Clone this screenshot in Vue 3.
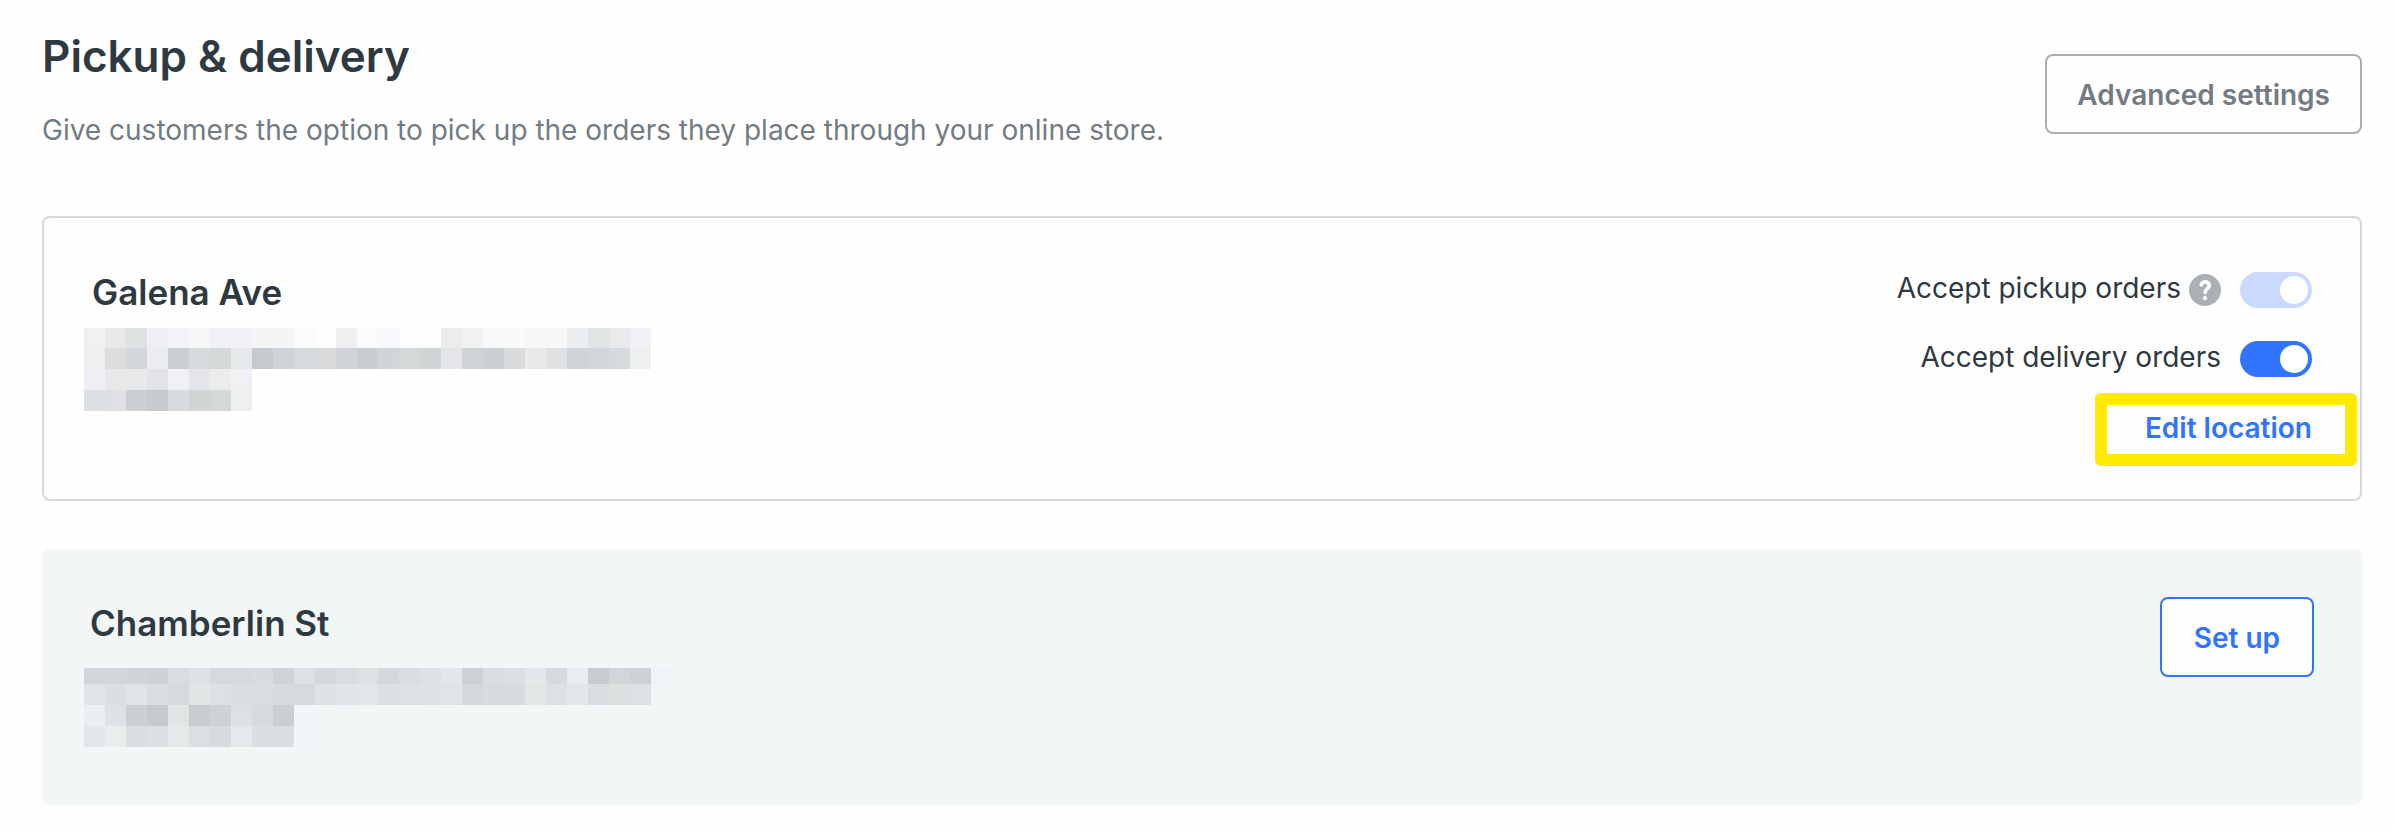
<template>
  <main class="page">
    <header class="page-header">
      <div>
        <h1 class="page-title">Pickup &amp; delivery</h1>
        <p class="page-intro">Give customers the option to pick up the orders they place through your online store.</p>
      </div>
      <button type="button" class="btn btn-muted">Advanced settings</button>
    </header>

    <section class="card card-active">
      <div>
        <h2 class="card-title">Galena Ave</h2>
        <div class="mosaic" aria-hidden="true">
          <div v-for="(row, r) in galenaAddress" :key="r" class="mosaic-row">
            <span v-for="(color, c) in row" :key="c" :style="{ background: '#' + color }"></span>
          </div>
        </div>
      </div>

      <div class="controls">
        <div class="control">
          <label for="pickup">Accept pickup orders</label>
          <button type="button" class="help" aria-label="About pickup orders">
            <svg viewBox="0 0 32 32" width="32" height="32">
              <circle cx="16" cy="16" r="16" fill="#abb0b4" />
              <path d="M12.200 10.800C13 8.600 14.400 7.900 16.100 7.900c2.500 0 4.200 1.400 4.200 3.500 0 3.300-4.200 3.200-4.200 7.200" fill="none" stroke="#fff" stroke-width="3.600" stroke-linecap="round" />
              <circle cx="16" cy="24.200" r="2.100" fill="#fff" />
            </svg>
          </button>
          <input id="pickup" v-model="pickup" type="checkbox" class="toggle" disabled />
        </div>
        <div class="control">
          <label for="delivery">Accept delivery orders</label>
          <input id="delivery" v-model="delivery" type="checkbox" class="toggle" />
        </div>
        <a href="#" class="edit-link" @click.prevent>Edit location</a>
      </div>
    </section>

    <section class="card card-inactive">
      <div>
        <h2 class="card-title">Chamberlin St</h2>
        <div class="mosaic mosaic-short" aria-hidden="true">
          <div v-for="(row, r) in chamberlinAddress" :key="r" class="mosaic-row">
            <span v-for="(color, c) in row" :key="c" :style="{ background: '#' + color }"></span>
          </div>
        </div>
      </div>
      <button type="button" class="btn btn-primary">Set up</button>
    </section>
  </main>
</template>

<script setup>
import { ref } from 'vue';

const pickup = ref(true);
const delivery = ref(true);

// Pixelated addresses, one colour per block.
const toRows = (rows) => rows.map((row) => row.split(' '));

const galenaAddress = toRows([
  'f0f1f3 e8e9eb dee2e3 eeeff2 f3f4f7 f6f7f7 f0f1f4 f0f1f4 f4f5f5 f3f4f6 fafcfb fcfefd efeff2 fafcfc f8f9fc fcfdfd fcfdfd ebedec f1f3f2 f9fbfa f9fbfa f6f8f7 f6f8f7 ecedf0 e2e5e6 e9eaec f0f1f4',
  'eff0f0 dcddde d3d7d9 ecedf0 cbcfd3 d6dadd d5d8d9 e7e8ea c6c9cd d0d3d6 d6d9dd d9dadc d1d4d7 cacdd1 d1d5d9 d4d8d9 d1d5d6 e4e5e8 cfd3d6 ccd0d4 dadbdd e8e9eb e0e1e3 d0d4d7 d2d6d9 d6dade edf0ee',
  'eff0f3 e7e8ea e8e9eb e2e3e6 f0f1f4 e4e5e8 ebedec f0f1f4',
  'dce0e2 dfe0e2 cbcfd3 c6cacd d7dbdd d1d5d6 d4d8d9 eef0f0',
]);

const chamberlinAddress = toRows([
  'd2d6d8 d2d6d8 d1d5d7 ced2d4 dadde0 dde2e4 d6dadd d5dadc d8dce0 d0d4d6 dde1e4 d3d8da d9dde0 dce1e1 d4d8da d9dde0 dee2e5 e3e7ea cdd1d3 dadde0 dde0e3 e4e8ea d6dadc e9edf0 c8cccf d2d6d8 ced2d5 f0f4f7',
  'dfe4e7 d9dee1 e0e4e7 dadee1 d5dadc e0e6e5 dde1e4 dadde0 dadde0 d7dade d6dadc dde2e5 e0e5e9 e2e6e9 dbe0e3 dce1e4 dee2e5 e1e4e7 d5d9dc d7dbde d8dcdf e2e7e6 dde1e4 e3e7ea dadde1 dce1e0 dce1e3 f1f5f5',
  'ebeff3 dee2e5 ccd0d3 c5cacd e0e6e5 c7cccf ced2d5 dde1e4 d7dbde cbcfd3 f2f6f8',
  'e3e7eb e8eeed d9dee1 dbe0e3 e4eaea dadfe2 d6dbde e4eaea d9dee1 d9dee1 f2f6f8',
]);
</script>

<style>
body { background: #fefefe; }
</style>

<style scoped>
.page {
  padding: 32px 32px 24px 42px;
  font-family: Inter, "Liberation Sans", sans-serif;
  font-size: 28px;
  line-height: 40px;
  color: #2f3941;
}

.page-header { display: flex; justify-content: space-between; align-items: flex-start; margin-bottom: 66px; }
.page-title { margin: 0 0 30px; font-size: 44px; line-height: 48px; font-weight: 600; }
.page-intro { margin: 0; color: #737b83; }

.btn {
  flex: none;
  padding: 19px 32px 17px;
  border: 2px solid;
  border-radius: 8px;
  background: #fefefe;
  font: inherit;
  font-weight: 600;
  cursor: pointer;
}
.btn-muted { margin-top: 22px; padding-inline: 30px; border-color: #a7afb4; color: #737b83; }
.btn-primary { border-color: #3074ff; color: #3074ff; }

.card {
  display: flex;
  justify-content: space-between;
  align-items: flex-start;
  border-radius: 8px;
}
.card-active { margin-bottom: 48px; padding: 52px 48px 51px; border: 2px solid #d3d9dc; }
.card-inactive { padding: 48px 48px 58px; background: #f3f6f7; }
.card-title { margin: 0; font-size: 35px; line-height: 44px; font-weight: 600; }

/* The blocks start a little to the left of the title. */
.mosaic { margin: 14px 0 0 -8px; }
.mosaic-row { display: flex; height: 21px; }
.mosaic-row:first-child { height: 20px; }
.mosaic-row span { width: 21px; }
.card-inactive .card-title { padding-top: 4px; }
.mosaic-short { margin: 23px 0 0 -6px; }
.mosaic-short .mosaic-row:first-child { height: 16px; }

.controls { display: flex; flex-direction: column; align-items: flex-end; gap: 29px; }
.control { display: flex; align-items: center; height: 40px; }
.control label { padding-bottom: 4px; }

.help { display: flex; margin-left: 8px; padding: 0; border: 0; background: none; cursor: pointer; }

.toggle {
  appearance: none;
  width: 72px;
  height: 36px;
  margin: 0 0 0 19px;
  padding: 4px;
  border-radius: 18px;
  background: #c9cfd4;
  cursor: pointer;
}
.toggle::before {
  content: "";
  display: block;
  width: 28px;
  height: 28px;
  border-radius: 50%;
  background: #fff;
}
.toggle:checked { background: #3074ff; }
.toggle:checked::before { margin-left: auto; }
.toggle:disabled { background: #c9dafe; cursor: default; }

.edit-link { position: relative; color: #3074ff; font-weight: 600; text-decoration: none; }
/* Callout frame drawn round the link. */
.edit-link::after {
  content: "";
  position: absolute;
  inset: -15px -45px -18px -50px;
  border: 12px solid #ffea00;
  border-radius: 6px;
}
</style>
